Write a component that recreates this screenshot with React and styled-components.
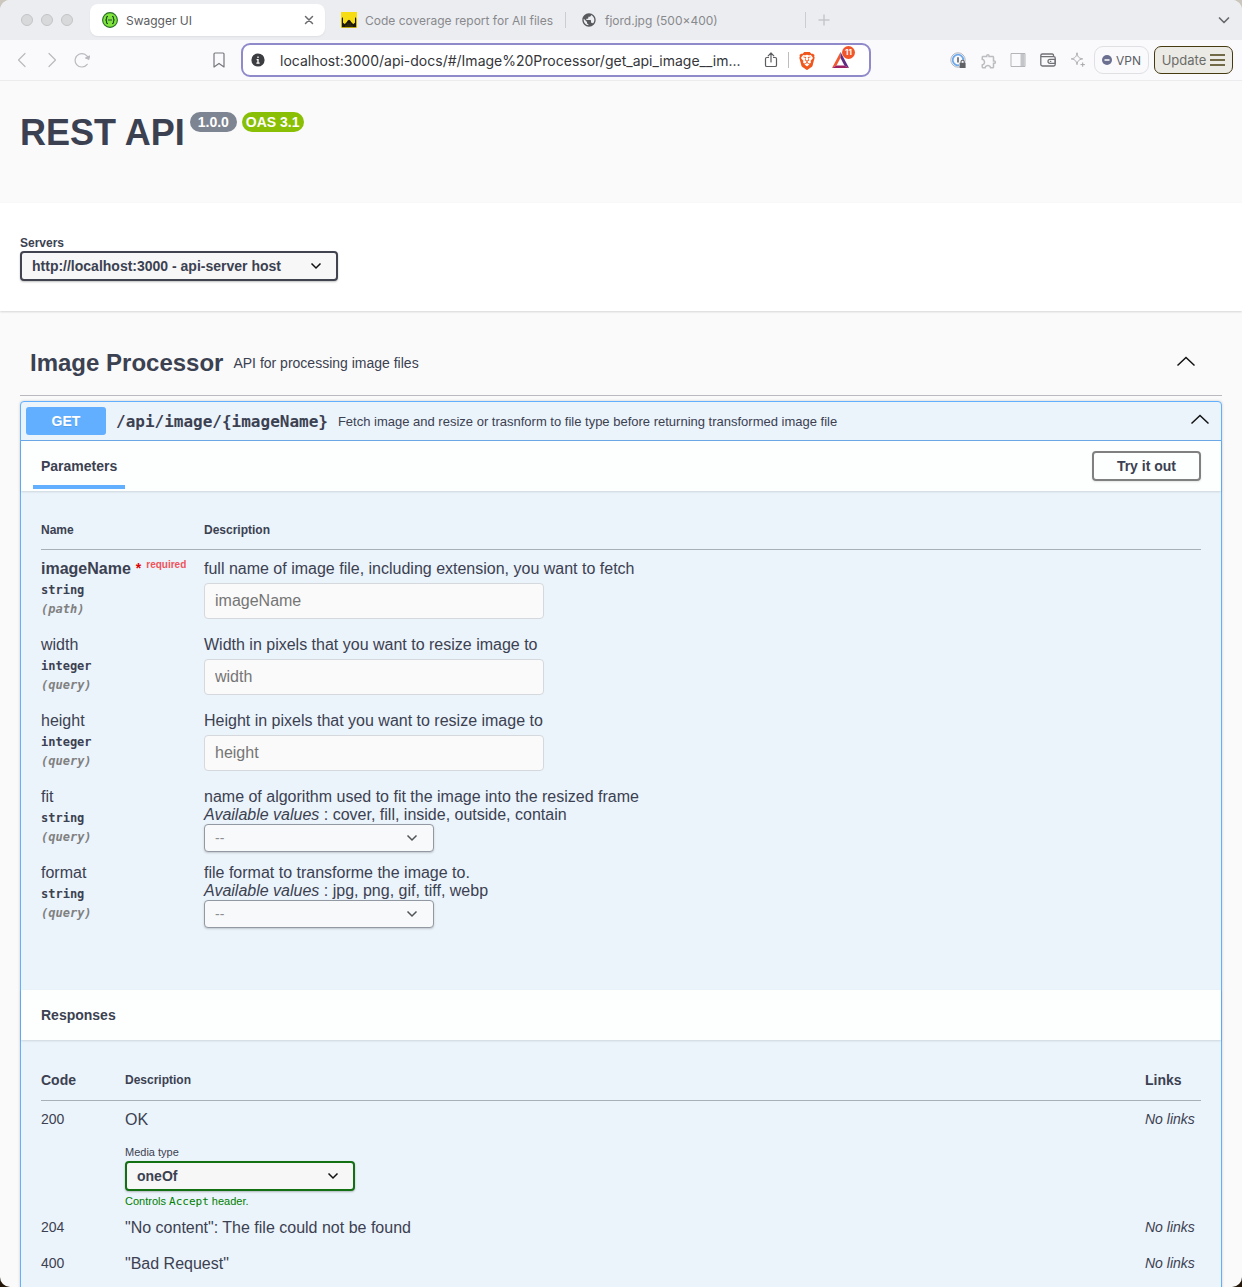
import React from "react";
import styled, { createGlobalStyle, css } from "styled-components";
import { SiBrave } from "react-icons/si";
import { MdPublic, MdOutlineExtension } from "react-icons/md";

const GlobalStyle = createGlobalStyle`
  *, *::before, *::after { box-sizing: border-box; }
  html { background: linear-gradient(#cbc7bf 50%, #24170a 50%); }
  body {
    margin: 0;
    color: #3b4151;
    font-family: "Liberation Sans", Arial, sans-serif;
    font-size: 14px;
  }
  button, input, select { font-family: inherit; color: inherit; }
  h1, h2, h3, h4, p { margin: 0; }
`;

const Window = styled.div`
  display: flex;
  flex-direction: column;
  height: 100vh;
  overflow: hidden;
  border-radius: 10px;
  background: #fafafa;
`;

const Svg = styled.svg`
  display: block;
  flex: none;
  fill: none;
`;

/* ---------- browser chrome ---------- */

const chromeFont = css`
  font-family: Inter, Roboto, sans-serif;
`;

const TabStrip = styled.header`
  ${chromeFont}
  display: flex;
  align-items: center;
  flex: none;
  height: 40px;
  padding-right: 10px;
  background: #ecedf1;
  color: #88898c;
  font-size: 12px;
`;

const Lights = styled.div`
  display: flex;
  gap: 8px;
  width: 86px;
  padding-left: 21px;
`;

const Light = styled.span`
  width: 12px;
  height: 12px;
  border: 1px solid #c3c4c6;
  border-radius: 50%;
  background: #d8d9db;
`;

const Tab = styled.div`
  display: flex;
  align-items: center;
  flex: 0 1 240px;
  gap: 8px;
  min-width: 0;
  height: ${(p) => (p.$active ? "32px" : "16px")};
  padding: ${(p) => (p.$active ? "0 8px 0 12px" : "0 15px")};
  white-space: nowrap;
  ${(p) =>
    p.$active &&
    css`
      flex-basis: 235px;
      margin: 0 1px 0 4px;
      border-radius: 8px;
      background: #fff;
      box-shadow: 0 1px 2px rgba(0, 0, 0, 0.06);
      color: #5b5c60;
    `}
  ${(p) => p.$divided && "border-right: 1px solid #cccdd1;"}
`;

const TabTitle = styled.span`
  flex: 1;
`;

const IconButton = styled.button`
  display: grid;
  place-items: center;
  flex: none;
  width: 16px;
  height: 16px;
  padding: 0;
  border: 0;
  background: none;
  color: ${(p) => p.$tone || "#6a6b6f"};
  ${(p) => p.$push && "margin-left: auto;"}
`;

const NewTab = styled(IconButton)`
  margin-left: 10px;
`;

const Toolbar = styled.div`
  ${chromeFont}
  display: flex;
  align-items: center;
  flex: none;
  height: 41px;
  padding-right: 9px;
  border-bottom: 1px solid #ececee;
  background: #fafafc;
`;

const NavButtons = styled.nav`
  display: flex;
  gap: 14px;
  width: 241px;
  padding: 0 14px;
`;

const Address = styled.div`
  display: flex;
  align-items: center;
  flex: 1;
  min-width: 0;
  height: 34px;
  padding: 0 18px 0 8px;
  border: 2px solid #8f8bcb;
  border-radius: 9px;
  background: #fff;
`;

const AddressInput = styled.input`
  flex: 1;
  min-width: 0;
  margin: 0 16px 0 15px;
  padding: 0;
  border: 0;
  outline: 0;
  background: none;
  color: #35363a;
  font-size: 14px;
  text-overflow: ellipsis;
`;

const AddressActions = styled.div`
  display: flex;
  align-items: center;
  gap: 9px;
`;

const AddressRule = styled.span`
  width: 1px;
  height: 16px;
  background: #bdbdc0;
`;

const RewardsButton = styled.button`
  position: relative;
  width: 20px;
  height: 20px;
  margin-left: 8px;
  padding: 0;
  border: 0;
  background: none;
`;

const RewardsCount = styled.span`
  position: absolute;
  top: -4px;
  right: -4px;
  width: 13px;
  height: 13px;
  border-radius: 50%;
  background: #f1562b;
  color: #fff;
  font-size: 8px;
  font-weight: 700;
  line-height: 13px;
  text-align: center;
`;

const Extensions = styled.div`
  display: flex;
  align-items: center;
  gap: 14px;
  padding: 0 8px 0 79px;
`;

const PillButton = styled.button`
  display: flex;
  align-items: center;
  justify-content: center;
  flex: none;
  gap: 4px;
  width: ${(p) => (p.$wide ? "79px" : "55px")};
  height: 28px;
  margin-left: ${(p) => (p.$wide ? "5px" : "0")};
  padding: 0;
  border: 1px solid ${(p) => (p.$wide ? "#453a10" : "#dfe0e4")};
  border-radius: ${(p) => (p.$wide ? "7px" : "9px")};
  background: ${(p) => (p.$wide ? "#ebeae5" : "transparent")};
  color: ${(p) => (p.$wide ? "#6c6c69" : "#5d5f66")};
  font-size: ${(p) => (p.$wide ? "13px" : "12px")};
`;

/* ---------- page ---------- */

const Page = styled.main`
  flex: 1;
  min-height: 0;
  overflow: hidden;
`;

const Info = styled.section`
  display: flex;
  align-items: flex-start;
  gap: 5px;
  height: 122px;
  padding: 31px 20px 0;
`;

const Title = styled.h1`
  font-size: 36px;
  line-height: 42px;
`;

const Badge = styled.span`
  padding: 0 ${(p) => (p.$oas ? "4px" : "8px")};
  border-radius: 10px;
  background: ${(p) => (p.$oas ? "#89bf04" : "#7d8492")};
  color: #fff;
  font-size: 14px;
  font-weight: 700;
  line-height: 20px;
`;

const Servers = styled.section`
  padding: 33px 20px 30px;
  background: #fff;
  box-shadow: 0 1px 2px rgba(0, 0, 0, 0.15);
`;

const FieldLabel = styled.label`
  display: block;
  font-size: ${(p) => (p.$small ? "11px" : "12px")};
  font-weight: ${(p) => (p.$small ? 400 : 700)};
  line-height: ${(p) => (p.$small ? "14px" : "15px")};
`;

const SelectWrap = styled.div`
  display: grid;
  align-items: center;
  width: ${(p) => p.$width};
  max-width: 100%;
  opacity: ${(p) => (p.$muted ? 0.7 : 1)};

  > * { grid-area: 1 / 1; }
  > svg {
    justify-self: end;
    margin-right: 16px;
    pointer-events: none;
  }
`;

const SelectBox = styled.select`
  width: 100%;
  height: ${(p) => (p.$muted ? "28px" : "30px")};
  padding: 0 40px 0 10px;
  border: ${(p) => (p.$muted ? "1px solid #6f747f" : `2px solid ${p.$edge || "#41444e"}`)};
  border-radius: 4px;
  background: ${(p) => (p.$muted ? "#fdfcfb" : "#f7f7f7")};
  box-shadow: 0 1px 2px rgba(0, 0, 0, 0.25);
  color: ${(p) => (p.$muted ? "#666" : "#3b4151")};
  font-size: 14px;
  font-weight: ${(p) => (p.$muted ? 400 : 700)};
  opacity: 1;
  appearance: none;
`;

const Content = styled.section`
  padding: 0 20px;
`;

const TagHeader = styled.div`
  display: flex;
  align-items: center;
  height: 85px;
  padding: 19px 26px 0 10px;
  border-bottom: 1px solid rgba(59, 65, 81, 0.35);
`;

const TagName = styled.h2`
  font-size: 24px;
  line-height: 28px;
`;

const TagText = styled.p`
  flex: 1;
  padding: 0 10px;
`;

const Operation = styled.article`
  min-height: 1000px;
  margin-top: 5px;
  border: 1px solid #61affe;
  border-radius: 4px;
  background: #ebf3fb;
  box-shadow: 0 0 3px rgba(0, 0, 0, 0.19);
`;

const Summary = styled.div`
  display: flex;
  align-items: center;
  height: 39px;
  padding: 0 11px 0 5px;
  border-bottom: 1px solid #6ba9e6;
`;

const Method = styled.span`
  width: 80px;
  border-radius: 3px;
  background: #61affe;
  color: #fff;
  font-weight: 700;
  line-height: 28px;
  text-align: center;
  text-shadow: 0 1px 0 rgba(0, 0, 0, 0.1);
`;

const Path = styled.span`
  padding: 0 10px;
  font-family: "DejaVu Sans Mono", monospace;
  font-size: 16px;
  font-weight: 700;
`;

const SummaryText = styled.span`
  flex: 1;
  font-size: 13px;
`;

const BlockHeader = styled.div`
  display: flex;
  align-items: center;
  justify-content: space-between;
  height: 50px;
  padding: 0 20px;
  background: #fdfefe;
  box-shadow: 0 1px 2px rgba(0, 0, 0, 0.12);
`;

const BlockTitle = styled.h4`
  font-size: 14px;
  line-height: 50px;
`;

const SectionTab = styled(BlockTitle)`
  align-self: flex-start;
  height: 48px;
  margin-left: -8px;
  padding: 0 8px;
  border-bottom: 4px solid #61affe;
`;

const TryButton = styled.button`
  height: 30px;
  padding: 0 23px;
  border: 2px solid #808080;
  border-radius: 4px;
  background: transparent;
  box-shadow: 0 1px 2px rgba(0, 0, 0, 0.1);
  font-size: 14px;
  font-weight: 700;
`;

const TableArea = styled.div`
  padding: ${(p) => (p.$last ? "20px" : "20px 20px 60px")};
`;

const Table = styled.table`
  width: 100%;
  border-collapse: separate;
  border-spacing: 0;
  table-layout: fixed;
`;

const HeadCell = styled.th`
  width: ${(p) => p.$width || "auto"};
  height: ${(p) => p.$height || "39px"};
  padding: 0;
  border-bottom: 1px solid #a9afb9;
  font-size: ${(p) => (p.$large ? "14px" : "12px")};
  text-align: left;
`;

const Cell = styled.td`
  height: ${(p) => p.$height};
  padding: ${(p) => (p.$small ? "9px" : "10px")} 0 0;
  font-size: ${(p) => (p.$small ? "14px" : "16px")};
  font-style: ${(p) => (p.$italic ? "italic" : "normal")};
  line-height: 18px;
  vertical-align: top;
  white-space: ${(p) => (p.$small ? "nowrap" : "normal")};
`;

const ParamName = styled.label`
  display: flex;
  gap: 5px;
  margin-bottom: 3px;
  font-weight: ${(p) => (p.$required ? 700 : 400)};
`;

const Required = styled.span`
  color: #f0545a;
  font-size: 10px;
  line-height: 10px;
`;

const Star = styled.span`
  color: #e00000;
  font-size: 14px;
  line-height: 16px;
`;

const Mono = styled.div`
  color: ${(p) => (p.$location ? "#808080" : "#3b4151")};
  font-family: "DejaVu Sans Mono", monospace;
  font-size: 12px;
  font-style: ${(p) => (p.$location ? "italic" : "normal")};
  font-weight: 700;
  line-height: 19px;
`;

const ParamInput = styled.input`
  display: block;
  width: 340px;
  max-width: 100%;
  height: 36px;
  margin-top: 5px;
  padding: 0 10px;
  border: 1px solid #d5d8dc;
  border-radius: 4px;
  background: #fafafa;
  font-size: 16px;

  &::placeholder { color: #757575; opacity: 1; }
`;

const MediaType = styled.div`
  display: grid;
  gap: 2px;
  margin-top: 16px;
`;

const AcceptNote = styled.small`
  padding-top: 1px;
  color: #008000;
  font-size: 11px;
  line-height: 14px;

  code { font-family: "DejaVu Sans Mono", monospace; }
`;

/* ---------- icons ---------- */

const Stroke = ({ size = 16, view = 16, width = 1, children }) => (
  <Svg
    width={size}
    height={size}
    viewBox={`0 0 ${view} ${view}`}
    stroke="currentColor"
    strokeWidth={width}
    strokeLinecap="round"
    strokeLinejoin="round"
    aria-hidden="true"
  >
    {children}
  </Svg>
);

const SwaggerIcon = () => (
  <Svg width="16" height="16" viewBox="0 0 16 16" aria-hidden="true">
    <circle cx="8" cy="8" r="7.4" fill="#7fe53a" stroke="#2b6d2c" strokeWidth="1.1" />
    <path
      d="M6 4.3c-1.3 0-1.5.4-1.5 1.5v.9c0 .8-.3 1.2-1.1 1.3.8.1 1.1.5 1.1 1.3v.9c0 1.1.2 1.5 1.5 1.5M10 4.3c1.3 0 1.5.4 1.5 1.5v.9c0 .8.3 1.2 1.1 1.3-.8.1-1.1.5-1.1 1.3v.9c0 1.1-.2 1.5-1.5 1.5M6 8h4"
      stroke="#1f4a2a"
      strokeWidth="1.2"
    />
  </Svg>
);

const IstanbulIcon = () => (
  <Svg width="16" height="16" viewBox="0 0 16 16" aria-hidden="true">
    <path d="M0 0h16v16H0z" fill="#f6dc12" />
    <path
      d="M0.800 15.200V6.500L1.400 5l.6 1.500v4.300l2 1.500c.4-1.200 1-1.800 1.800-2 .3-1.300 1-1.900 2.200-2.500 1.200.6 1.900 1.200 2.200 2.500.8.2 1.400.8 1.800 2l2-1.500V6.500l.6-1.500.6 1.500v8.700z"
      fill="#1a1608"
    />
    <path d="M4 14h8M6 12h4" stroke="#6d6210" strokeWidth=".5" />
  </Svg>
);

const InfoIcon = () => (
  <Svg width="14" height="14" viewBox="0 0 14 14" aria-hidden="true">
    <circle cx="7" cy="7" r="6.600" fill="#3c3d41" />
    <path d="M7 3.400v1.600M5.600 6.600H7v3.600M5.400 10.200h3.200" stroke="#fff" strokeWidth="1.300" />
  </Svg>
);

const RewardsIcon = () => (
  <Svg width="20" height="20" viewBox="0 0 20 20" aria-hidden="true">
    <path d="M9.500 2 1 18l4.500-2.600 4-7.400z" fill="#f15a31" />
    <path d="M1 18h17l-4.600-2.600H5.500z" fill="#9b1f63" />
    <path d="M9.500 2 18 18l-4.600-2.600-3.900-7.400z" fill="#5e2b83" />
  </Svg>
);

const PasswordIcon = () => (
  <Svg width="16" height="16" viewBox="0 0 16 16" aria-hidden="true">
    <circle cx="8" cy="8" r="7.200" stroke="#b0b6bf" strokeWidth="1" />
    <path d="M9 13.200A5.300 5.300 0 1 1 13.300 8" stroke="#6ea8ea" strokeWidth="1.800" />
    <path d="M8 5.200v5.400" stroke="#5b6068" strokeWidth="1.600" />
    <path d="M9.600 10.800h6V16h-6z" fill="#606165" />
    <path d="M11 11V9.800a1.600 1.600 0 0 1 3.200 0V11" stroke="#606165" strokeWidth="1.100" />
  </Svg>
);

const PanelIcon = () => (
  <Svg width="16" height="16" viewBox="0 0 16 16" aria-hidden="true">
    <path d="M1 1.500h14v13H1z" stroke="#b4b5b8" />
    <path d="M10.500 2h4v12h-4z" fill="#c4c5c8" />
  </Svg>
);

const WalletIcon = () => (
  <Stroke width={1.3}>
    <path d="M13.500 4.500V3.200c0-.7-.5-1.200-1.200-1.200H2.400C1.400 2 .8 2.600.8 3.400s.6 1.300 1.600 1.300h11.400c.8 0 1.400.5 1.400 1.300v6.600c0 .8-.6 1.400-1.400 1.400H2.400C1.400 14 .8 13.400.8 12.600V3.400" />
    <path d="M15.200 7.300H10a2 2 0 0 0 0 4h5.200z" />
    <path d="M10.400 9.300h.4" />
  </Stroke>
);

const SparkleIcon = () => (
  <Stroke>
    <path d="M7 1.200c.7 3.800 1.700 4.900 5.600 5.700C8.700 7.700 7.700 8.700 7 12.600 6.200 8.700 5.200 7.700 1.300 6.900 5.200 6.100 6.200 5 7 1.200z" />
    <path d="M12.700 10.800v3.600M10.900 12.600h3.600" />
  </Stroke>
);

const ChevronUp = () => (
  <Svg width="20" height="16" viewBox="0 0 20 16" stroke="#111" strokeWidth="1.500" aria-hidden="true">
    <path d="m1.500 10.500 8.500-8 8.500 8" />
  </Svg>
);

const SelectArrow = () => (
  <Svg width="12" height="8" viewBox="0 0 12 8" stroke="#111" strokeWidth="1.500" aria-hidden="true">
    <path d="m1.500 1.500 4.500 4.500 4.500-4.500" />
  </Svg>
);

const ToggleButton = styled(IconButton)`
  width: 20px;
`;

/* ---------- data ---------- */

const params = [
  { name: "imageName", type: "string", place: "path", required: true, text: "full name of image file, including extension, you want to fetch" },
  { name: "width", type: "integer", place: "query", text: "Width in pixels that you want to resize image to" },
  { name: "height", type: "integer", place: "query", text: "Height in pixels that you want to resize image to" },
  { name: "fit", type: "string", place: "query", text: "name of algorithm used to fit the image into the resized frame", values: ["cover", "fill", "inside", "outside", "contain"] },
  { name: "format", type: "string", place: "query", text: "file format to transforme the image to.", values: ["jpg", "png", "gif", "tiff", "webp"] },
];

const responses = [
  { code: "200", text: "OK", media: true },
  { code: "204", text: '"No content": The file could not be found' },
  { code: "400", text: '"Bad Request"' },
];

const Dropdown = ({ id, width, muted, edge, options }) => (
  <SelectWrap $width={width} $muted={muted}>
    <SelectBox id={id} $muted={muted} $edge={edge} disabled={muted}>
      {options.map((o) => (
        <option key={o}>{o}</option>
      ))}
    </SelectBox>
    <SelectArrow />
  </SelectWrap>
);

const ParamRow = ({ param }) => (
  <tr>
    <Cell $height="76px">
      <ParamName htmlFor={param.name} $required={param.required}>
        {param.name}
        {param.required && (
          <>
            <Star>*</Star>
            <Required>required</Required>
          </>
        )}
      </ParamName>
      <Mono>{param.type}</Mono>
      <Mono $location>({param.place})</Mono>
    </Cell>
    <Cell $height="76px">
      <p>{param.text}</p>
      {param.values ? (
        <>
          <p>
            <i>Available values</i> : {param.values.join(", ")}
          </p>
          <Dropdown id={param.name} width="230px" muted options={["--", ...param.values]} />
        </>
      ) : (
        <ParamInput id={param.name} placeholder={param.name} disabled />
      )}
    </Cell>
  </tr>
);

const ResponseRow = ({ item }) => (
  <tr>
    <Cell $small $height="36px">{item.code}</Cell>
    <Cell $height="36px">
      <p>{item.text}</p>
      {item.media && (
        <MediaType>
          <FieldLabel $small htmlFor="media">Media type</FieldLabel>
          <Dropdown id="media" width="230px" edge="#137013" options={["oneOf"]} />
          <AcceptNote>
            Controls <code>Accept</code> header.
          </AcceptNote>
        </MediaType>
      )}
    </Cell>
    <Cell $small $italic $height="36px">No links</Cell>
  </tr>
);

const BrowserChrome = () => (
  <>
    <TabStrip>
      <Lights>
        <Light />
        <Light />
        <Light />
      </Lights>
      <Tab $active>
        <SwaggerIcon />
        <TabTitle>Swagger UI</TabTitle>
        <IconButton aria-label="Close tab">
          <Stroke size={10} view={10} width={1.5}>
            <path d="m1.500 1.500 7 7M8.500 1.500l-7 7" />
          </Stroke>
        </IconButton>
      </Tab>
      <Tab $divided>
        <IstanbulIcon />
        <TabTitle>Code coverage report for All files</TabTitle>
      </Tab>
      <Tab $divided>
        <MdPublic size={16} color="#58595d" />
        <TabTitle>fjord.jpg (500×400)</TabTitle>
      </Tab>
      <NewTab $tone="#c6c7ca" aria-label="New tab">
        <Stroke size={12} view={12} width={1.5}>
          <path d="M6 1v10M1 6h10" />
        </Stroke>
      </NewTab>
      <IconButton $push aria-label="Search tabs">
        <Stroke size={12} view={12} width={1.7}>
          <path d="m1.500 4 4.500 4.500L10.500 4" />
        </Stroke>
      </IconButton>
    </TabStrip>
    <Toolbar>
      <NavButtons>
        <IconButton $tone="#b9babd" aria-label="Back">
          <Stroke width={1.2}><path d="M11 1.500 4.500 8l6.500 6.500" /></Stroke>
        </IconButton>
        <IconButton $tone="#b9babd" aria-label="Forward">
          <Stroke width={1.2}><path d="M5 1.500 11.500 8 5 14.500" /></Stroke>
        </IconButton>
        <IconButton $tone="#b9babd" aria-label="Reload">
          <Stroke width={1.2}>
            <path d="M13.200 12.300a6.700 6.700 0 1 1 1.200-5.300" />
            <path d="m11.600 6 3.200 1.200L15.600 4z" fill="currentColor" />
          </Stroke>
        </IconButton>
        <IconButton $push $tone="#77787c" aria-label="Bookmark">
          <Stroke width={1.2}>
            <path d="M3 2c0-.6.4-1 1-1h8c.6 0 1 .4 1 1v13l-5-3.600L3 15z" />
          </Stroke>
        </IconButton>
      </NavButtons>
      <Address>
        <InfoIcon />
        <AddressInput
          aria-label="Address"
          readOnly
          value="localhost:3000/api-docs/#/Image%20Processor/get_api_image__im..."
        />
        <AddressActions>
          <IconButton $tone="#5c5d61" aria-label="Share">
            <Stroke width={1.2}>
              <path d="M5.500 5.500H3.800c-.8 0-1.300.5-1.300 1.300v6.400c0 .8.5 1.300 1.300 1.300h8.400c.8 0 1.300-.5 1.300-1.300V6.800c0-.8-.5-1.300-1.300-1.300h-1.700M8 10V1.200M5.200 3.800 8 1l2.800 2.800" />
            </Stroke>
          </IconButton>
          <AddressRule />
          <IconButton $tone="#f1561d" aria-label="Shields">
            <SiBrave size={18} />
          </IconButton>
          <RewardsButton aria-label="Rewards">
            <RewardsIcon />
            <RewardsCount>11</RewardsCount>
          </RewardsButton>
        </AddressActions>
      </Address>
      <Extensions>
        <IconButton aria-label="Passwords"><PasswordIcon /></IconButton>
        <IconButton $tone="#bcbdc0" aria-label="Extensions"><MdOutlineExtension size={18} /></IconButton>
        <IconButton aria-label="Side panel"><PanelIcon /></IconButton>
        <IconButton $tone="#717276" aria-label="Wallet"><WalletIcon /></IconButton>
        <IconButton $tone="#a6a7ab" aria-label="Assistant"><SparkleIcon /></IconButton>
      </Extensions>
      <PillButton>
        <Svg width="10" height="10" viewBox="0 0 10 10" aria-hidden="true">
          <circle cx="5" cy="5" r="5" fill="#6b7090" />
          <path d="M2.500 5h5" stroke="#fff" strokeWidth="1.500" />
        </Svg>
        VPN
      </PillButton>
      <PillButton $wide>
        Update
        <Svg width="15" height="12" viewBox="0 0 15 12" stroke="#4b4013" strokeWidth="1.300" aria-hidden="true">
          <path d="M0 1h15M0 6h15M0 11h15" />
        </Svg>
      </PillButton>
    </Toolbar>
  </>
);

export default function App() {
  return (
    <>
      <GlobalStyle />
      <Window>
        <BrowserChrome />
        <Page>
          <Info>
            <Title>REST API</Title>
            <Badge>1.0.0</Badge>
            <Badge $oas>OAS 3.1</Badge>
          </Info>
          <Servers>
            <FieldLabel htmlFor="server">Servers</FieldLabel>
            <Dropdown id="server" width="318px" options={["http://localhost:3000 - api-server host"]} />
          </Servers>
          <Content>
            <TagHeader>
              <TagName>Image Processor</TagName>
              <TagText>API for processing image files</TagText>
              <ToggleButton aria-label="Collapse section"><ChevronUp /></ToggleButton>
            </TagHeader>
            <Operation>
              <Summary>
                <Method>GET</Method>
                <Path>/api/image/&#123;imageName&#125;</Path>
                <SummaryText>
                  Fetch image and resize or trasnform to file type before returning transformed image file
                </SummaryText>
                <ToggleButton aria-label="Collapse operation"><ChevronUp /></ToggleButton>
              </Summary>
              <BlockHeader>
                <SectionTab>Parameters</SectionTab>
                <TryButton>Try it out</TryButton>
              </BlockHeader>
              <TableArea>
                <Table>
                  <thead>
                    <tr>
                      <HeadCell $width="163px">Name</HeadCell>
                      <HeadCell>Description</HeadCell>
                    </tr>
                  </thead>
                  <tbody>
                    {params.map((p) => (
                      <ParamRow key={p.name} param={p} />
                    ))}
                  </tbody>
                </Table>
              </TableArea>
              <BlockHeader>
                <BlockTitle>Responses</BlockTitle>
              </BlockHeader>
              <TableArea $last>
                <Table>
                  <thead>
                    <tr>
                      <HeadCell $large $height="41px" $width="84px">Code</HeadCell>
                      <HeadCell>Description</HeadCell>
                      <HeadCell $large $width="56px">Links</HeadCell>
                    </tr>
                  </thead>
                  <tbody>
                    {responses.map((r) => (
                      <ResponseRow key={r.code} item={r} />
                    ))}
                  </tbody>
                </Table>
              </TableArea>
            </Operation>
          </Content>
        </Page>
      </Window>
    </>
  );
}
